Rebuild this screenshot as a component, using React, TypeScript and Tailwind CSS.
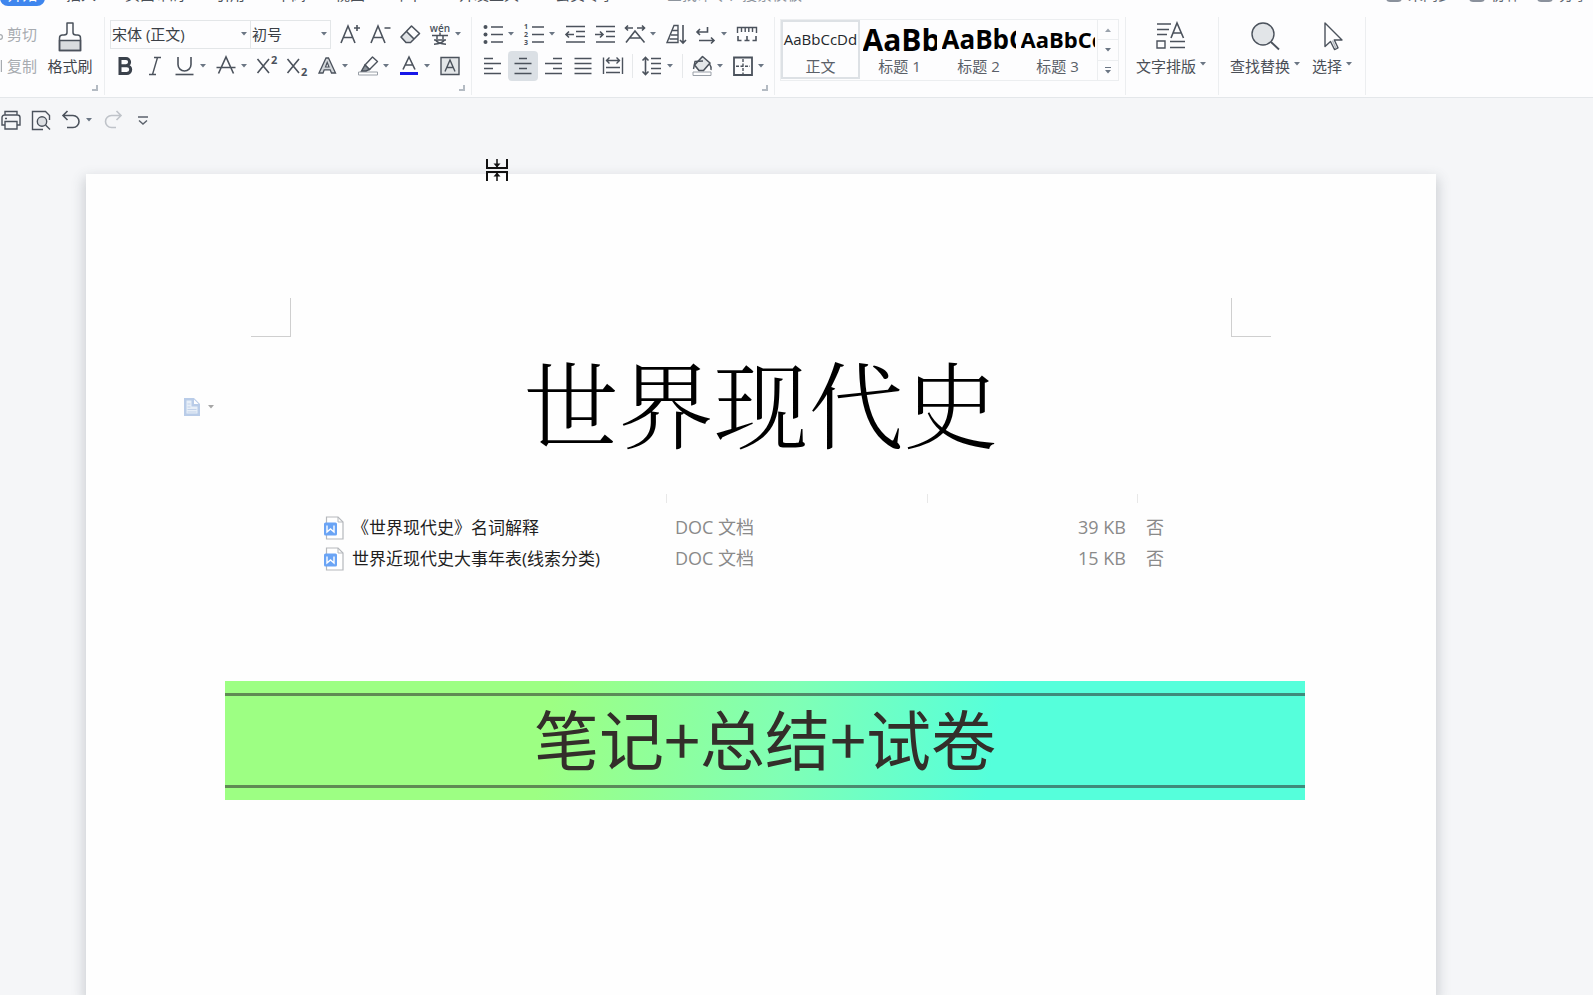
import React from "react";

type IconProps = { children: React.ReactNode; className?: string; box?: number };

function Icon({ children, className = "size-[22px]", box = 22 }: IconProps) {
  return (
    <svg
      viewBox={`0 0 ${box} ${box}`}
      className={`shrink-0 ${className}`}
      fill="none"
      stroke="#4b525c"
      strokeWidth="1.4"
      aria-hidden="true"
    >
      {children}
    </svg>
  );
}

function Caret({ className = "fill-[#6b7684]" }: { className?: string }) {
  return (
    <svg viewBox="0 0 6 4" className={`h-1 w-1.5 shrink-0 ${className}`} aria-hidden="true">
      <path d="M0 0h6L3 3.6z" />
    </svg>
  );
}

function Tool({
  label,
  menu = false,
  active = false,
  children,
}: {
  label: string;
  menu?: boolean;
  active?: boolean;
  children: React.ReactNode;
}) {
  return (
    <button type="button" aria-label={label} title={label} className="flex h-[30px] shrink-0 items-center">
      <span
        className={`flex h-[30px] w-[30px] items-center justify-center rounded-sm ${active ? "bg-[#dbe0e5]" : ""}`}
      >
        <Icon>{children}</Icon>
      </span>
      {menu && (
        <span className="flex w-[11px] items-center">
          <Caret />
        </span>
      )}
    </button>
  );
}

function Corner() {
  return <span className="absolute right-1.5 bottom-1 size-1.5 border-r-2 border-b-2 border-[#b4bbc3]" />;
}

function Group({ className, children }: { className: string; children: React.ReactNode }) {
  return (
    <section className={`relative h-[78px] shrink-0 border-r border-[#eceef0] ${className}`}>{children}</section>
  );
}

function Divider() {
  return <span className="mx-1 h-6 w-px bg-[#e6e8ea]" />;
}

const tabs = [
  { label: "插入", className: "w-[30px] ml-[21px]" },
  { label: "页面布局", className: "w-[60px] ml-[29px]" },
  { label: "引用", className: "w-[30px] ml-[30px]" },
  { label: "审阅", className: "w-[30px] ml-[31px]" },
  { label: "视图", className: "w-[30px] ml-[29px]" },
  { label: "章节", className: "w-[30px] ml-[29px]" },
  { label: "开发工具", className: "w-[60px] ml-[35px]" },
  { label: "会员专享", className: "w-[60px] ml-[36px]" },
];

function TabBar() {
  return (
    <nav className="flex h-[6px] items-end justify-between overflow-hidden text-[15px] leading-5 text-[#4a4f57]">
      <div className="flex items-end">
        <a href="#home" className="block h-6 w-[45px] rounded-b-lg bg-[#3f86ee] pt-0.5 text-center text-white">
          开始
        </a>
        {tabs.map((t) => (
          <a key={t.label} href="#tab" className={`block h-[22px] whitespace-nowrap ${t.className}`}>
            {t.label}
          </a>
        ))}
        <a href="#search" className="ml-[52px] block h-[22px] whitespace-nowrap text-[#8d949d]">
          查找命令、搜索模板
        </a>
      </div>
      <div className="flex items-end gap-4 pr-1 text-[#5f6670]">
        {["未同步", "协作", "分享"].map((t) => (
          <a key={t} href="#share" className="flex h-[22px] items-end gap-1.5 whitespace-nowrap">
            <span className="mb-1 h-4 w-4 rounded border-2 border-[#8a919c]" />
            <span className="h-[22px]">{t}</span>
          </a>
        ))}
      </div>
    </nav>
  );
}

function Clipboard() {
  return (
    <Group className="flex w-[105px]">
      <div className="flex w-[42px] flex-col gap-2 pt-[5px] text-[15px] leading-6 text-[#a7abb0]">
        <button type="button" className="flex items-center gap-1 whitespace-nowrap">
          <svg viewBox="0 0 3 12" className="h-3 w-[3px]" fill="none" stroke="#a7abb0" strokeWidth="1.2" aria-hidden="true">
            <circle cx="0" cy="9" r="2.4" />
          </svg>
          剪切
        </button>
        <button type="button" className="flex items-center gap-1 whitespace-nowrap">
          <svg viewBox="0 0 3 12" className="h-3 w-[3px]" fill="none" stroke="#a7abb0" strokeWidth="1.2" aria-hidden="true">
            <path d="M1.4 0v12" />
          </svg>
          复制
        </button>
      </div>
      <button type="button" className="flex w-14 flex-col items-center text-[15px] leading-5 text-[#3f444b]">
        <svg viewBox="0 0 26 32" className="mt-1 h-8 w-[26px]" fill="none" stroke="#4b525c" strokeWidth="1.5" aria-hidden="true">
          <path d="M2.5 19.500h21v10h-21z" fill="#d9dcdf" />
          <path d="M10 2h6v9.500c0 2 1 2.500 3 2.500h1.500c2 0 3 1 3 3v12.500h-21V17c0-2 1-3 3-3H7c2 0 3-.5 3-2.500z" strokeLinejoin="round" />
        </svg>
        <span className="mt-[3px] whitespace-nowrap">格式刷</span>
      </button>
      <Corner />
    </Group>
  );
}

function FontGroup() {
  return (
    <Group className="w-[367px] pl-[5px]">
      <div className="flex h-[34px] items-center">
        <label className="flex h-[29px] w-[141px] items-center border border-[#e3e6e8] pr-[3px]">
          <select aria-label="字体" className="min-w-0 flex-1 appearance-none pl-px text-[15px] leading-6 text-[#3a3f46] outline-none">
            <option>宋体 (正文)</option>
          </select>
          <Caret />
        </label>
        <label className="flex h-[29px] w-[80px] items-center border border-l-0 border-[#e3e6e8] pr-[3px]">
          <select aria-label="字号" className="min-w-0 flex-1 appearance-none pl-px text-[15px] leading-6 text-[#3a3f46] outline-none">
            <option>初号</option>
          </select>
          <Caret />
        </label>
        <span className="w-1" />
        <Tool label="增大字号">
          <path d="M2 20 9 3l7 17M4.500 14.500h9M18 2v6M15 5h6" strokeWidth="1.600" />
        </Tool>
        <Tool label="减小字号">
          <path d="M2 20 9 3l7 17M4.500 14.500h9M15.500 5h6" strokeWidth="1.600" />
        </Tool>
        <Tool label="清除格式">
          <path d="M8.500 8 15 14.500 10.500 19H6.500L2 14.500z" fill="#dfe2e5" stroke="none" />
          <path d="M12.500 3 20.500 10.500 11.500 19.500H7L2 14z M7.500 8.500l7.500 7.500" strokeLinejoin="round" strokeWidth="1.600" />
        </Tool>
        <Tool label="拼音指南" menu>
          <text x="11" y="9" textAnchor="middle" fontSize="10" fontWeight="600" fill="#4b525c" stroke="none">wén</text>
          <path d="M11 9.500v2.500M3 12.500h16M8 13v3M14 13v3M5 17h12M6.500 17c2 3 6 4 10.500 4.200M15.500 17c-2 3-6 4-10.500 4.200" strokeWidth="1.500" />
        </Tool>
      </div>
      <div className="flex h-[30px] items-center">
        <Tool label="加粗">
          <path d="M6 3.500h6a3.500 3.500 0 0 1 0 7.200H6zM6 10.700h6.800a3.900 3.900 0 0 1 0 7.800H6z" strokeWidth="3" stroke="#3a414b" />
        </Tool>
        <Tool label="倾斜">
          <path d="M10 2.500h7M5 19.500h7M13.500 2.500 8.500 19.500" />
        </Tool>
        <Tool label="下划线" menu>
          <path d="M4 2v7.500a6.500 6.500 0 0 0 13 0V2" strokeWidth="1.600" />
          <path d="M1.500 19.500h18" strokeWidth="1.600" />
        </Tool>
        <Tool label="删除线" menu>
          <path d="M3.500 18.500 11 2l7.500 16.500M1.500 12.500h19" strokeWidth="1.600" />
        </Tool>
        <Tool label="上标">
          <path d="M1.500 4 13 18M13 4 1.500 18" strokeWidth="1.600" />
          <text x="15" y="9" fontSize="11" fontWeight="700" fill="#4b525c" stroke="none">2</text>
        </Tool>
        <Tool label="下标">
          <path d="M1.500 4 13 18M13 4 1.500 18" strokeWidth="1.600" />
          <text x="15" y="20.500" fontSize="11" fontWeight="700" fill="#4b525c" stroke="none">2</text>
        </Tool>
        <Tool label="文字效果" menu>
          <path d="M3 18 10 3h2.500l7 15h-4l-1.300-3.200h-6L7 18z" strokeWidth="1.300" fill="#d3d7db" />
          <path d="M9.500 12 11.200 7.500l1.800 4.500z" fill="#fff" strokeWidth="1.200" />
        </Tool>
        <Tool label="突出显示" menu>
          <path d="M1.500 17h19v3h-19z" strokeWidth="1" stroke="#9aa0a8" fill="#fff" />
          <path d="M8 10 15.500 2 20.500 6.500 12.500 14.500z" strokeLinejoin="round" />
          <path d="M8 10 12.500 14.500 9 16H4.500z" fill="#8d949c" />
        </Tool>
        <Tool label="字体颜色" menu>
          <path d="M5 14.500 11 2l6 12.500M7.500 10h7" strokeWidth="1.600" />
          <path d="M2 18.500h18" stroke="#1717e8" strokeWidth="3" />
        </Tool>
        <Tool label="字符底纹">
          <path d="M2 2.500h18v17H2z" fill="#e3e6e8" />
          <path d="M6 16.500 11 5l5 11.500M7.500 12.500h7" />
        </Tool>
      </div>
      <Corner />
    </Group>
  );
}

function ParagraphGroup() {
  return (
    <Group className="w-[303px] pl-1.5">
      <div className="flex h-[34px] items-center">
        <Tool label="项目符号" menu>
          <path d="M9 4h12M9 11.500h12M9 19h12" strokeWidth="1.600" />
          <g fill="#4b525c" stroke="none">
            <circle cx="3.500" cy="4" r="2" />
            <circle cx="3.500" cy="11.500" r="2" />
            <circle cx="3.500" cy="19" r="2" />
          </g>
        </Tool>
        <Tool label="编号" menu>
          <path d="M9 4h12M9 11.500h12M9 19h12" strokeWidth="1.600" />
          <g fill="#4b525c" stroke="none" fontSize="7" fontWeight="700">
            <text x="1" y="6">1</text>
            <text x="1" y="14">2</text>
            <text x="1" y="22">3</text>
          </g>
        </Tool>
        <Tool label="减少缩进量">
          <path d="M2 3.500h19M12 8.500h9M12 13.500h9M2 19h19" strokeWidth="1.600" />
          <path d="M10 11.500H2M5 8.500 2 11.500l3 3" strokeWidth="1.600" />
        </Tool>
        <Tool label="增加缩进量">
          <path d="M2 3.500h19M12 8.500h9M12 13.500h9M2 19h19" strokeWidth="1.600" />
          <path d="M1 11.500h8M6 8.500l3 3-3 3" strokeWidth="1.600" />
        </Tool>
        <Tool label="中文版式" menu>
          <path d="M2 19.500 11 8l9.500 11.500M5.500 15h11" strokeWidth="1.600" />
          <path d="M9 5H1.500M4 2.500 1.500 5 4 7.500M13 5h7.500M18 2.500 20.500 5 18 7.500" strokeWidth="1.600" />
        </Tool>
        <Tool label="排序">
          <path d="M13 2.500v17H2L9 2.500zM7.500 7.500H13M6 12H13M4.500 16H13" />
          <path d="M18 2v17.500M15 17l3 3 3-3" strokeWidth="1.600" />
        </Tool>
        <Tool label="显示/隐藏编辑标记" menu>
          <path d="M12.500 4v5H2M5 6 2 9l3 3M4 17.500h15M16 14.500l3 3-3 3" strokeWidth="1.600" />
        </Tool>
        <Tool label="制表位">
          <path d="M1.500 10V4.500h19V10M5.500 5v4M9.200 5v4M12.800 5v4M16.500 5v4" />
          <path d="M2 13v4.500h3.500M20 13v4.500h-3.500M11 13v4.500M8.500 17.500h5" strokeWidth="1.600" />
        </Tool>
      </div>
      <div className="flex h-[30px] items-center">
        <Tool label="左对齐">
          <path d="M2 3.500h9M2 8.500h17M2 13.500h9M2 18.500h17" strokeWidth="1.600" />
        </Tool>
        <Tool label="居中对齐" active>
          <path d="M7 3.500h8M2.500 8.500h17M7 13.500h8M2.500 18.500h17" strokeWidth="1.600" />
        </Tool>
        <Tool label="右对齐">
          <path d="M11 3.500h9M3 8.500h17M11 13.500h9M3 18.500h17" strokeWidth="1.600" />
        </Tool>
        <Tool label="两端对齐">
          <path d="M2.500 3.500h17M2.500 8.500h17M2.500 13.500h17M2.500 18.500h17" strokeWidth="1.600" />
        </Tool>
        <Tool label="分散对齐">
          <path d="M1.500 2.500v16.500M20.500 2.500v16.500M4 12.500h14M4 17.500h14M4 5.500h14M7.500 2.500l-3 3 3 3M14.500 2.500l3 3-3 3" />
        </Tool>
        <Divider />
        <Tool label="行距" menu>
          <path d="M10 3.500h10M10 8.500h10M10 13.500h10M10 18.500h10" strokeWidth="1.600" />
          <path d="M4.500 2.500v17M1.500 5.500l3-3 3 3M1.500 16.500l3 3 3-3" strokeWidth="1.600" />
        </Tool>
        <Divider />
        <Tool label="底纹颜色" menu>
          <path d="M2 17h18v3.500H2z" strokeWidth="1" stroke="#9aa0a8" />
          <path d="M11.500 1.500 19 8l-6.500 7.500H8L3.500 10z" fill="#e3e6e8" strokeLinejoin="round" strokeWidth="1.600" />
          <path d="M4 6.500 2.500 14M18.500 9c1.500 2 2 3.500 1.500 6M3.500 6.500 12 6" />
        </Tool>
        <Tool label="边框" menu>
          <path d="M2 2.500h18v17.500H2z" strokeWidth="1.800" />
          <path d="M11 4v15M4 11.200h14" strokeDasharray="3 1.500" />
        </Tool>
      </div>
      <Corner />
    </Group>
  );
}

const styles = [
  { name: "标题 1", sample: "AaBb", className: "text-[30px]" },
  { name: "标题 2", sample: "AaBbC", className: "text-[26px]" },
  { name: "标题 3", sample: "AaBbCc", className: "text-[22px]" },
];

function StylesGroup() {
  return (
    <Group className="w-[351px] pl-[5px]">
      <div className="mt-0.5 flex h-[62px] w-[339px] border border-[#eceef0]">
        <button type="button" className="flex h-[59px] w-[79px] shrink-0 flex-col items-center border-2 border-[#dde1e5]">
          <span className="flex h-[34px] items-center font-['Open_Sans'] text-[15px] text-[#24272b]">AaBbCcDd</span>
          <span className="text-[15px] leading-5 text-[#5a6068]">正文</span>
        </button>
        {styles.map((s) => (
          <button key={s.name} type="button" className="flex h-[59px] w-[79px] shrink-0 flex-col items-center pt-0.5">
            <span
              className={`flex h-[34px] w-[74px] items-center overflow-hidden font-['Open_Sans'] font-bold text-black ${s.className}`}
            >
              {s.sample}
            </span>
            <span className="text-[15px] leading-5 text-[#5a6068]">{s.name}</span>
          </button>
        ))}
        <div className="flex min-w-0 flex-1 flex-col divide-y divide-[#eceef0] border-l border-[#eceef0]">
          <button type="button" aria-label="上一行样式" className="flex flex-1 items-center justify-center">
            <Caret className="rotate-180 fill-[#9aa2ac]" />
          </button>
          <button type="button" aria-label="下一行样式" className="flex flex-1 items-center justify-center">
            <Caret />
          </button>
          <button type="button" aria-label="更多样式" className="flex flex-1 flex-col items-center justify-center gap-0.5">
            <span className="h-px w-1.5 bg-[#6b7684]" />
            <Caret />
          </button>
        </div>
      </div>
    </Group>
  );
}

function BigTool({ label, className, children }: { label: string; className: string; children: React.ReactNode }) {
  return (
    <button type="button" className={`flex h-16 shrink-0 flex-col items-center text-[15px] leading-5 text-[#4a4f57] ${className}`}>
      <Icon box={30} className="mt-1 size-[30px]">
        {children}
      </Icon>
      <span className="mt-[5px] flex items-center gap-1 whitespace-nowrap">
        {label}
        <span className="-mt-1">
          <Caret />
        </span>
      </span>
    </button>
  );
}

function Ribbon() {
  return (
    <header className="overflow-hidden border-b border-[#e4e7ea] bg-[#fdfdfe]">
      <TabBar />
      <div className="flex pt-[11px] pb-0.5">
        <Clipboard />
        <FontGroup />
        <ParagraphGroup />
        <StylesGroup />
        <Group className="w-[93px] pl-2">
          <BigTool label="文字排版" className="w-[74px]">
            <path d="M1 3h14M1 8.500h12M1 13.500h10M1 20h8v7H1zM14 20.500h15M14 26.500h15" />
            <path d="M15 17 21 2l6.500 15M17.500 12h7.500" strokeWidth="1.600" />
          </BigTool>
        </Group>
        <Group className="flex w-[147px] gap-1.5 pl-2">
          <BigTool label="查找替换" className="w-[76px]">
            <circle cx="13" cy="13" r="11" fill="#e2e5e8" />
            <path d="m21 21 8 7.500" strokeWidth="1.800" />
          </BigTool>
          <BigTool label="选择" className="w-[46px]">
            <path d="M8 2v23.500l5.500-5 4 8 3.500-1.700-3.700-7.800H25z" strokeLinejoin="round" />
            <path d="M15.500 19.500l3.500 8" stroke="#b4bac1" />
          </BigTool>
        </Group>
      </div>
    </header>
  );
}

function QuickAccess() {
  const b = "flex h-[30px] w-[30px] shrink-0 items-center justify-center";
  return (
    <div className="flex h-[44px] items-center">
      <button type="button" aria-label="打印" className="flex h-[30px] w-[26px] items-center justify-start">
        <Icon>
          <path d="M5 6V2.500h12V6M5 16H2V8.500A2.500 2.500 0 0 1 4.500 6h13A2.500 2.500 0 0 1 20 8.500V16h-3" />
          <path d="M5 12.500h12v7.500H5zM5 9.500h2" />
        </Icon>
      </button>
      <button type="button" aria-label="打印预览" className={b}>
        <Icon>
          <path d="M13 20.500H2.500v-18h13l4 4V11" />
          <circle cx="12" cy="12.500" r="4.700" fill="#dde0e4" />
          <path d="m15.500 16 4.500 4.500" />
        </Icon>
      </button>
      <button type="button" aria-label="撤销" className="flex h-[30px] w-[42px] items-center">
        <span className={b}>
          <Icon>
            <path d="M7.500 2 3 6.500 7.500 11M3 6.500H13a6 6 0 0 1 0 12H7" strokeWidth="1.600" />
          </Icon>
        </span>
        <Caret />
      </button>
      <button type="button" aria-label="恢复" className={b}>
        <Icon>
          <path d="M14.500 2 19 6.500 14.500 11M19 6.500H9.500a6 6 0 0 0 0 12H14" stroke="#bfc3c9" strokeWidth="1.600" />
        </Icon>
      </button>
      <button type="button" aria-label="自定义快速访问工具栏" className={b}>
        <svg viewBox="0 0 10 9" className="h-[9px] w-2.5" fill="none" stroke="#5b626c" strokeWidth="1.400" aria-hidden="true">
          <path d="M0 1h10M1 4.500 5 8l4-3.500" />
        </svg>
      </button>
    </div>
  );
}

function DocIcon() {
  return (
    <svg viewBox="0 0 20 24" className="h-6 w-5 shrink-0" fill="none" aria-hidden="true">
      <path d="M2.500 1h11.500l5 5v17H2.500z" fill="#fff" stroke="#b5b8bc" strokeWidth="1.200" />
      <path d="M14 1v5h5" stroke="#b5b8bc" />
      <rect x="0" y="6.500" width="13" height="13" rx="1.500" fill="#6aa4f5" />
      <path d="M3 9.500v6.500l3.500-3 3.500 3V9.500" stroke="#fff" strokeWidth="1.400" />
    </svg>
  );
}

const files = [
  { name: "《世界现代史》名词解释", type: "DOC 文档", size: "39 KB", locked: "否" },
  { name: "世界近现代史大事年表(线索分类)", type: "DOC 文档", size: "15 KB", locked: "否" },
];

function FileTable() {
  const tick = "block h-[9px] border-r border-[#e8e8e8]";
  return (
    <table className="mt-[37px] ml-[238px] w-[860px] table-fixed border-collapse text-[18px] leading-[31px] text-[#8a8a8a]">
      <colgroup>
        <col className="w-[343px]" />
        <col className="w-[261px]" />
        <col className="w-[210px]" />
        <col />
      </colgroup>
      <thead>
        <tr className="h-[18px] align-top leading-none">
          <th aria-label="名称" className="p-0"><span className={tick} /></th>
          <th aria-label="类型" className="p-0"><span className={tick} /></th>
          <th aria-label="大小" className="p-0"><span className={tick} /></th>
          <th aria-label="加密" className="p-0" />
        </tr>
      </thead>
      <tbody>
        {files.map((f) => (
          <tr key={f.name} className="h-[31px]">
            <td className="p-0 text-[17px] text-[#1f1f1f]">
              <span className="flex h-[31px] items-center gap-2 whitespace-nowrap">
                <DocIcon />
                {f.name}
              </span>
            </td>
            <td className="p-0 pl-2">{f.type}</td>
            <td className="p-0 pr-3 text-right">{f.size}</td>
            <td className="p-0 pl-2">{f.locked}</td>
          </tr>
        ))}
      </tbody>
    </table>
  );
}

export default function App() {
  return (
    <div className="flex min-h-screen flex-col overflow-hidden bg-[#f5f6f8] font-['Open_Sans','Noto_Sans_CJK_SC',sans-serif]">
      <Ribbon />
      <QuickAccess />
      <main className="relative mt-[32px] mr-[157px] ml-[86px] flex flex-1 flex-col bg-[#fefefe] shadow-[0_6px_12px_2px_rgba(70,80,90,0.24)]">
        <svg viewBox="0 0 24 24" className="absolute -top-4 left-[399px] size-6" fill="none" stroke="#111" strokeWidth="2" aria-hidden="true">
          <path d="M2 1v9h20V1M2 23v-9h20v9" />
          <path d="M12 1v8M12 23v-8" strokeWidth="1.500" />
          <path d="M8.500 5.500h7L12 9.500zM8.500 18.500h7L12 14.500z" fill="#111" stroke="none" />
        </svg>
        <div className="mt-[124px] flex justify-between px-[165px]">
          <span className="h-[39px] w-10 border-r border-b border-[#cfcfcf]" />
          <span className="h-[39px] w-10 border-b border-l border-[#cfcfcf]" />
        </div>
        <div className="mt-2 grid grid-cols-[205px_1fr_205px] items-center">
          <button type="button" aria-label="段落布局" className="ml-[98px] flex items-center gap-2 pt-3">
            <svg viewBox="0 0 16 18" className="h-[18px] w-4" aria-hidden="true">
              <path d="M0 0h10l6 6v12H0z" fill="#b9cce8" />
              <path d="M2.500 2.500h5v6h6v7h-11z" fill="#e8eff8" />
              <path d="M10 1.500 14.500 6H10z" fill="#fff" />
              <path d="M3.500 6h3M3.500 9h3M3.500 11.500h9M3.500 14h9" stroke="#c3d3ea" />
            </svg>
            <Caret className="fill-[#a6a6a6]" />
          </button>
          <h1 className="text-center font-['Noto_Serif_CJK_SC','Noto_Sans_CJK_SC',serif] text-[95px] leading-[112px] font-light whitespace-nowrap text-black">
            世界现代史
          </h1>
        </div>
        <FileTable />
        <div className="mt-[107px] mr-[131px] ml-[139px] bg-[linear-gradient(100deg,#9dff83_30%,#80ffb5_52%,#55ffdb_71%)] py-3">
          <p className="border-y-[3px] border-[#2b2b2b]/55 pb-1.5 text-center font-['Noto_Sans_CJK_SC',sans-serif] text-[65px] leading-[83px] font-normal whitespace-nowrap text-[#332e2a]">
            笔记+总结+试卷
          </p>
        </div>
      </main>
    </div>
  );
}
